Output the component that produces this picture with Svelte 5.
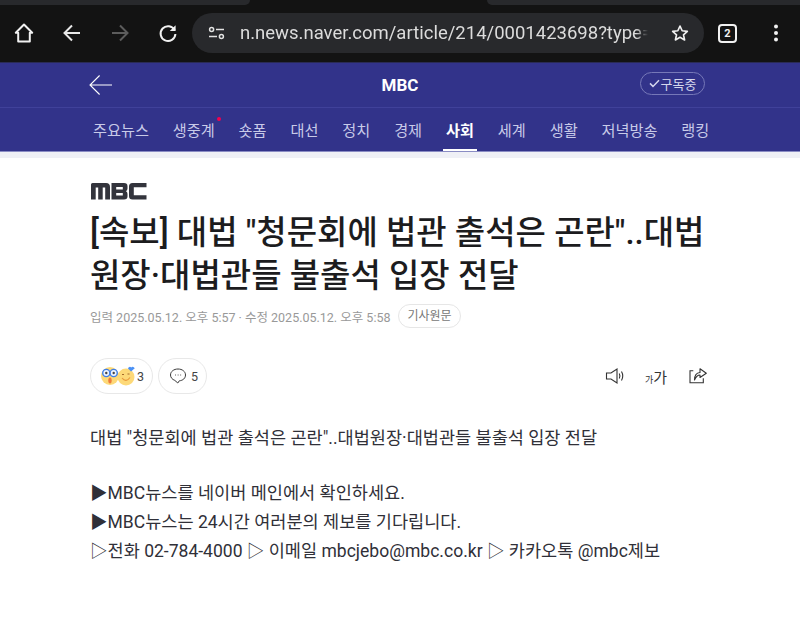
<script>
  const tabs = [
    { label: '주요뉴스' },
    { label: '생중계', live: true },
    { label: '숏폼' },
    { label: '대선' },
    { label: '정치' },
    { label: '경제' },
    { label: '사회', active: true },
    { label: '세계' },
    { label: '생활' },
    { label: '저녁방송' },
    { label: '랭킹' }
  ];
</script>

<div class="page">
  <div class="chrome">
    <div class="tabstrip">
      <div class="tab-left"></div>
      <div class="tab-right"></div>
    </div>
    <div class="toolbar">
      <svg class="tool home" width="24" height="24" viewBox="0 0 24 24" fill="none" stroke="#f1f1f1" stroke-width="2" stroke-linejoin="round"><path d="M12 3.5 3.8 11.8H6.2V20.6H17.8V11.8H20.2Z"/></svg>
      <svg class="tool back" width="24" height="24" viewBox="0 0 24 24" fill="none" stroke="#e8e8e8" stroke-width="2"><path d="M20 12H5M12 4.5 4.5 12 12 19.5"/></svg>
      <svg class="tool fwd" width="24" height="24" viewBox="0 0 24 24" fill="none" stroke="#5c5c5c" stroke-width="2"><path d="M4 12H19M12 4.5 19.5 12 12 19.5"/></svg>
      <svg class="tool reload" width="24" height="24" viewBox="0 0 24 24" fill="none" stroke="#f1f1f1" stroke-width="2"><path d="M18.6 9.2A7.4 7.4 0 1 0 19.4 13"/><path d="M19.6 4.2V10H13.8Z" fill="#f1f1f1" stroke="none"/></svg>
      <div class="omnibox">
        <svg class="tune" width="18" height="14" viewBox="0 0 18 14" fill="none" stroke="#e3e3e3" stroke-width="1.5"><circle cx="3.6" cy="3.4" r="2"/><path d="M8 3.4H16M1 10.4H9"/><circle cx="13.4" cy="10.4" r="2"/></svg>
        <span class="url">n.news.naver.com/article/214/0001423698?type=</span>
        <svg class="star" width="20" height="20" viewBox="0 0 24 24" fill="none" stroke="#f1f1f1" stroke-width="2" stroke-linejoin="round"><path d="M12 3.6 14.6 9.3 20.8 10 16.2 14.2 17.5 20.3 12 17.2 6.5 20.3 7.8 14.2 3.2 10 9.4 9.3Z"/></svg>
      </div>
      <div class="count">2</div>
      <svg class="more" width="6" height="18" viewBox="0 0 6 18" fill="#f1f1f1"><circle cx="3" cy="2.5" r="2"/><circle cx="3" cy="9" r="2"/><circle cx="3" cy="15.5" r="2"/></svg>
    </div>
  </div>

  <header class="head">
    <div class="head-top">
      <svg class="head-back" width="24" height="22" viewBox="0 0 24 22" fill="none" stroke="#fff" stroke-width="1.1"><path d="M23 11H1.2M10.6 1.5 1 11 10.6 20.5"/></svg>
      <span class="press">MBC</span>
      <span class="sub">
        <svg width="11" height="9" viewBox="0 0 11 9" fill="none" stroke="#d5d7ec" stroke-width="1.5"><path d="M1 4.4 4 7.4 10 1.2"/></svg>
        구독중
      </span>
    </div>
    <nav class="tabs">
      {#each tabs as tab}
        <span class="navtab" class:active={tab.active}>
          {tab.label}
          {#if tab.live}<i class="dot"></i>{/if}
        </span>
      {/each}
    </nav>
  </header>
  <div class="band"></div>

  <main class="article">
    <svg class="logo" width="56" height="17" viewBox="0 0 56 17" fill="#33343c">
      <path d="M0 1.5Q0 0 1.5 0H15Q19 0 19 4V16.500H14.200V4.500H11.700V16.500H7.200V4.500H4.700V16.500H0Z"/>
      <path d="M20.500 0H33Q36.500 0 36.500 3.200V5.600Q36.500 7.500 35 8.200Q36.500 8.900 36.500 11V13.500Q36.500 16.500 33 16.500H20.500ZM25.200 4V6.500H31.800V4ZM25.200 10V12.500H31.800V10Z" fill-rule="evenodd"/>
      <path d="M38 3.500Q38 0 41.500 0H55.500V4.200H42.800V12.300H55.500V16.500H41.500Q38 16.500 38 13Z"/>
    </svg>
    <h1>[속보] 대법 "청문회에 법관 출석은 곤란"..대법원장·대법관들 불출석 입장 전달</h1>
    <div class="meta">
      <span>입력 2025.05.12. 오후 5:57 · 수정 2025.05.12. 오후 5:58</span>
      <span class="origin">기사원문</span>
    </div>
    <div class="actions">
      <span class="pill react">
        <svg width="36" height="22" viewBox="0 0 36 22">
          <circle cx="26" cy="12" r="8.500" fill="#fdd978"/>
          <path d="M22 13Q26 18 30 12.500" fill="none" stroke="#e89a3c" stroke-width="1.200"/>
          <path d="M22 9.500h2M27.500 9h2" stroke="#a56a2a" stroke-width="1"/>
          <path d="M31 6.500 27.800 3.200Q29.800 .6 31.200 2.400Q33 .6 34.800 3.200Z" fill="#4a90f5"/>
          <circle cx="10" cy="11" r="9" fill="#fdd978"/>
          <circle cx="6.300" cy="8" r="3.600" fill="#eef4ff" stroke="#3f7fe8" stroke-width="1.400"/>
          <circle cx="13.700" cy="8" r="3.600" fill="#eef4ff" stroke="#3f7fe8" stroke-width="1.400"/>
          <circle cx="6.300" cy="8" r="1.200" fill="#444"/>
          <circle cx="13.700" cy="8" r="1.200" fill="#444"/>
          <ellipse cx="10" cy="15.500" rx="1.700" ry="3" fill="#ee7b3c"/>
        </svg>
        <span class="num">3</span>
      </span>
      <span class="pill comment">
        <svg width="18" height="18" viewBox="0 0 18 18" fill="none" stroke="#3a3a3a" stroke-width="1"><path d="M9 2C4.800 2 1.500 4.500 1.500 8C1.500 10.500 3.300 12.500 5.800 13.400L8.800 16L10.300 13.800C14 13.500 16.500 11.200 16.500 8C16.500 4.500 13.200 2 9 2Z"/><path d="M6 8H6.800M8.700 8H9.500M11.300 8H12.100" stroke-width="1.100"/></svg>
        <span>5</span>
      </span>
      <span class="tools">
        <svg width="20" height="18" viewBox="0 0 20 18" fill="none" stroke="#333" stroke-width="1.100"><path d="M1.500 6H6L12 2V16L6 12H1.500Z"/><path d="M14.300 6.500Q15.500 9 14.300 11.500M16.500 4.500Q19 9 16.500 13.500"/></svg>
        <span class="fontsize"><small>가</small>가</span>
        <svg width="20" height="18" viewBox="0 0 20 18" fill="none" stroke="#333" stroke-width="1.100"><path d="M6.300 3.700H3V15.700H16.300V11.300"/><path d="M7.500 13C7.500 8.500 10 5.800 13 5.500V1.800L19.300 6.200L13 10.500V8C10.500 8 8.800 10 7.500 13Z" stroke-linejoin="round"/></svg>
      </span>
    </div>
    <div class="body">
      <p>대법 "청문회에 법관 출석은 곤란"..대법원장·대법관들 불출석 입장 전달</p>
      <p class="gap">▶MBC뉴스를 네이버 메인에서 확인하세요.</p>
      <p>▶MBC뉴스는 24시간 여러분의 제보를 기다립니다.</p>
      <p>▷전화 02-784-4000 ▷ 이메일 mbcjebo@mbc.co.kr ▷ 카카오톡 @mbc제보</p>
    </div>
  </main>
</div>

<style>
  :global(body) {
    margin: 0;
    background: #fff;
    font-family: Roboto, "Noto Sans CJK KR", sans-serif;
  }
  .page {
    width: 800px;
    height: 630px;
    overflow: hidden;
  }
  .chrome {
    height: 62px;
    background: #131313;
  }
  .tabstrip {
    height: 5px;
    display: flex;
    justify-content: space-between;
  }
  .tab-left {
    width: 250px;
    background: #28292c;
    border-bottom-right-radius: 8px;
  }
  .tab-right {
    width: 313px;
    background: #28292c;
    border-bottom-left-radius: 8px;
  }
  .toolbar {
    height: 40px;
    margin-top: 8px;
    display: flex;
    align-items: center;
  }
  .tool.home { margin-left: 12px; }
  .tool.back { margin-left: 24px; }
  .tool.fwd { margin-left: 24px; }
  .tool.reload { margin-left: 24px; }
  .omnibox {
    width: 512px;
    height: 40px;
    margin-left: 12px;
    border-radius: 20px;
    background: #28292c;
    display: flex;
    align-items: center;
    box-sizing: border-box;
    padding: 0 14px 0 16px;
  }
  .url {
    margin-left: 14px;
    width: 408px;
    overflow: hidden;
    white-space: nowrap;
    color: #dcdcdc;
    font-size: 18.5px;
    mask-image: linear-gradient(to right, #000 97%, transparent);
  }
  .star { margin-left: 22px; }
  .count {
    width: 15px;
    height: 15px;
    margin-left: 14px;
    border: 2px solid #f1f1f1;
    border-radius: 4px;
    color: #f1f1f1;
    font-size: 11px;
    font-weight: 700;
    line-height: 15px;
    text-align: center;
  }
  .more { margin-left: 36px; }
  .head {
    height: 90px;
    box-sizing: border-box;
    background: #32338a;
    border-top: 1px solid #2a2b55;
    border-bottom: 1px solid #8a8cc4;
  }
  .head-top {
    height: 45px;
    box-sizing: border-box;
    padding: 0 89px;
    border-bottom: 1px solid #40419a;
    display: grid;
    grid-template-columns: 1fr auto 1fr;
    align-items: center;
  }
  .press {
    color: #fff;
    font-size: 17px;
    font-weight: 700;
  }
  .sub {
    height: 23px;
    width: 65px;
    box-sizing: border-box;
    justify-self: end;
    margin: -4px 6px 0 0;
    border: 1px solid #7678b8;
    border-radius: 12px;
    display: flex;
    align-items: center;
    justify-content: center;
    gap: 1px;
    color: #d5d7ec;
    font-size: 13px;
  }
  .tabs {
    height: 43px;
    display: flex;
    padding-left: 93px;
    gap: 23.9px;
  }
  .navtab {
    position: relative;
    color: #c8cae8;
    font-size: 15.2px;
    line-height: 46px;
    height: 43px;
  }
  .navtab.active {
    color: #fff;
    font-weight: 700;
  }
  .navtab.active::after {
    content: "";
    position: absolute;
    left: -3px;
    right: -3px;
    bottom: 0;
    height: 2px;
    background: #fff;
  }
  .dot {
    position: absolute;
    top: 9px;
    right: -6px;
    width: 4px;
    height: 4px;
    border-radius: 50%;
    background: #f5004f;
  }
  .band {
    height: 6px;
    background: #eff0f6;
  }
  .article {
    padding: 25px 90px 0;
  }
  .logo { display: block; margin-left: 1px; }
  h1 {
    margin: 11px 0 0;
    color: #1c1c1e;
    font-size: 33px;
    font-weight: 500;
    line-height: 43px;
  }
  .meta {
    margin-top: 7px;
    display: flex;
    align-items: center;
    gap: 8px;
    color: #999;
    font-size: 12.5px;
  }
  .origin {
    height: 24px;
    box-sizing: border-box;
    border: 1px solid #e6e6e6;
    border-radius: 12px;
    padding: 0 8px;
    line-height: 22px;
    font-size: 12px;
    color: #777;
  }
  .actions {
    margin-top: 30px;
    display: flex;
    align-items: center;
    gap: 5px;
  }
  .pill {
    height: 36px;
    box-sizing: border-box;
    border: 1px solid #e8e8e8;
    border-radius: 18px;
    display: flex;
    align-items: center;
    color: #444;
    font-size: 12.5px;
  }
  .react { width: 63px; padding-left: 9px; }
  .num { margin-left: 1px; }
  .comment { width: 49px; padding-left: 10px; gap: 4px; }
  .tools {
    margin-left: auto;
    margin-right: 3px;
    display: flex;
    align-items: center;
    gap: 20px;
  }
  .fontsize {
    color: #333;
    font-size: 15px;
  }
  .fontsize small {
    font-size: 9px;
  }
  .body {
    margin-top: 30px;
    color: #303038;
    font-size: 17.55px;
    line-height: 29px;
  }
  .body p { margin: 0; }
  .body .gap { margin-top: 26px; }
</style>
